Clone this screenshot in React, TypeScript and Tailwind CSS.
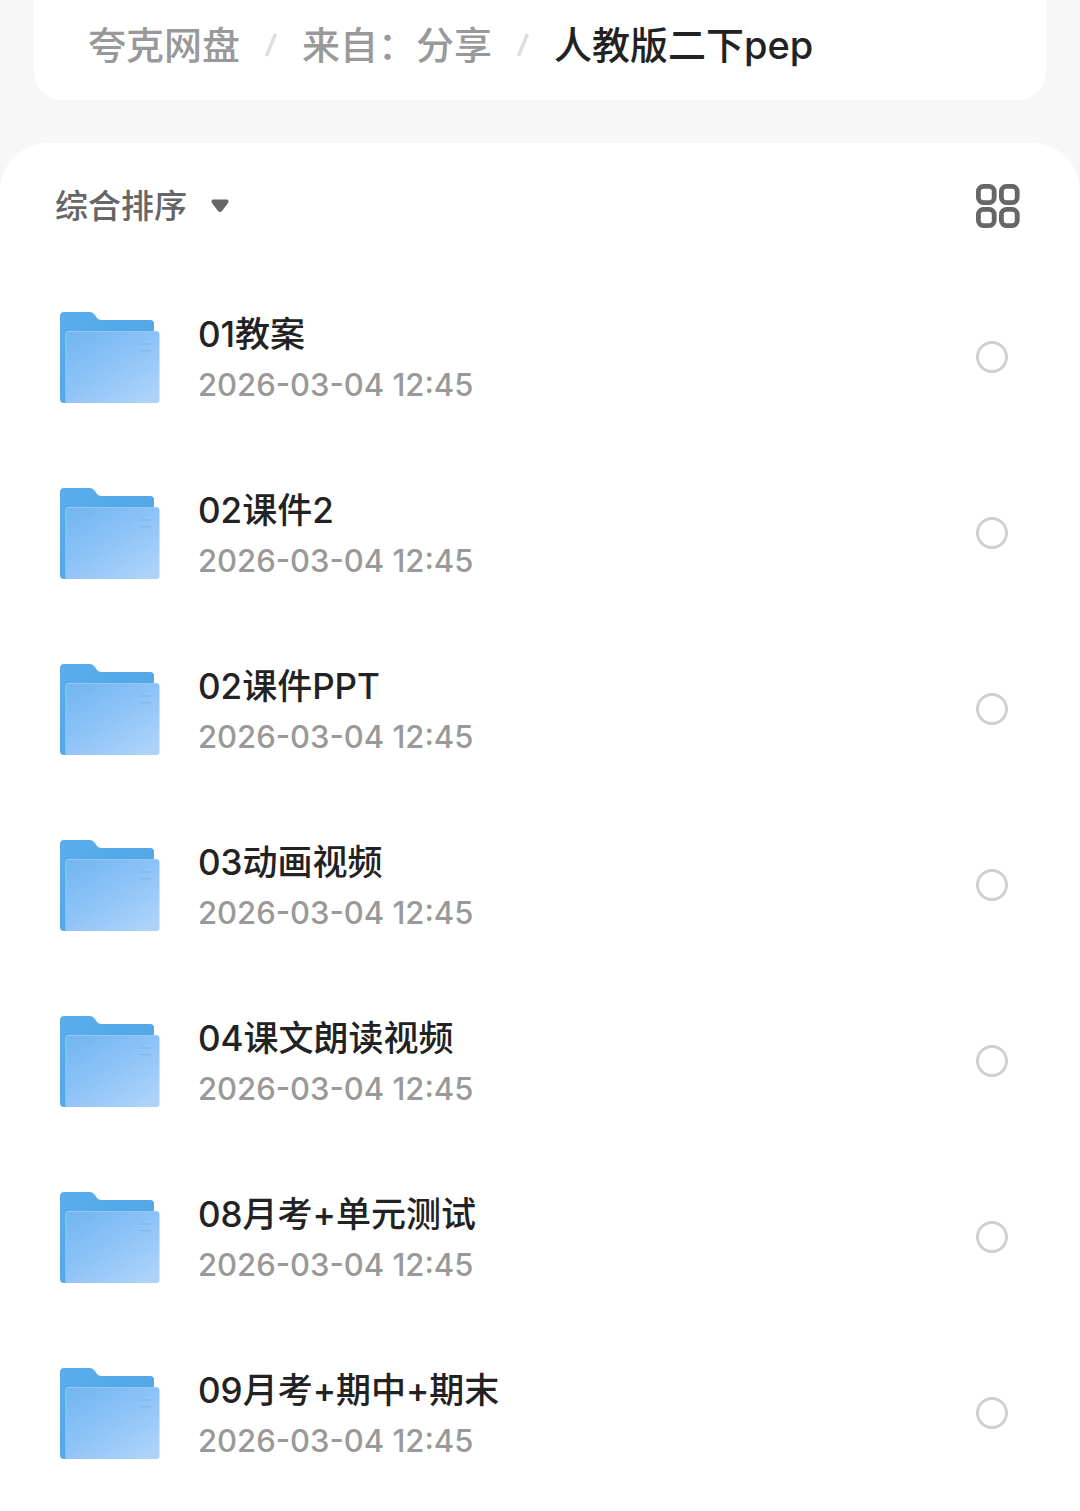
const crumbs = ['夸克网盘', '来自：分享']

const folders = [
  { name: '01教案', date: '2026-03-04 12:45' },
  { name: '02课件2', date: '2026-03-04 12:45' },
  { name: '02课件PPT', date: '2026-03-04 12:45' },
  { name: '03动画视频', date: '2026-03-04 12:45' },
  { name: '04课文朗读视频', date: '2026-03-04 12:45' },
  { name: '08月考+单元测试', date: '2026-03-04 12:45' },
  { name: '09月考+期中+期末', date: '2026-03-04 12:45' },
]

function FolderIcon() {
  return (
    <svg viewBox="0 0 100 92" className="w-25 shrink-0" aria-hidden="true">
      <defs>
        <linearGradient id="folder-back" x1="0" y1="0" x2="1" y2="1">
          <stop offset="0" stopColor="#5aafea" />
          <stop offset="0.4" stopColor="#53a8e8" />
          <stop offset="1" stopColor="#5aa9e6" />
        </linearGradient>
        <linearGradient id="folder-front" x1="0.1" y1="0" x2="0.9" y2="1">
          <stop offset="0" stopColor="#72b6f1" />
          <stop offset="0.5" stopColor="#8fc4f7" />
          <stop offset="1" stopColor="#afd4fb" />
        </linearGradient>
      </defs>
      <path
        d="M4 1H30Q33 1 35 4L37 7Q38.500 9 41 9H90Q94 9 94 13V92H4Q0 92 0 88V5Q0 1 4 1Z"
        fill="url(#folder-back)"
      />
      <path
        d="M8 20H96Q99.500 20 99.500 23V89Q99.500 92 96.500 92H5.500V22.500Q5.500 20 8 20Z"
        fill="url(#folder-front)"
      />
      <path
        d="M6 91V22.500Q6 20.500 8 20.500H96"
        fill="none"
        stroke="#93c8f6"
        strokeWidth="1"
      />
      <path d="M80 33H91M80 39.500H91" stroke="#7fb9ee" strokeWidth="1.500" />
    </svg>
  )
}

function GridIcon() {
  return (
    <svg
      viewBox="0 0 44 44"
      className="size-11"
      fill="none"
      stroke="#666666"
      strokeWidth="4.800"
      aria-hidden="true"
    >
      <rect x="2.400" y="2.400" width="15.800" height="16.200" rx="5" />
      <rect x="25.400" y="2.400" width="15.800" height="16.200" rx="5" />
      <rect x="2.400" y="25.400" width="15.800" height="16.200" rx="5" />
      <rect x="25.400" y="25.400" width="15.800" height="16.200" rx="5" />
    </svg>
  )
}

function Slash() {
  return (
    <svg viewBox="0 0 12 24" className="w-3 shrink-0" aria-hidden="true">
      <path d="M1.500 23L10.500 1" stroke="#dedede" strokeWidth="3.500" />
    </svg>
  )
}

export default function App() {
  return (
    <main className="min-h-screen bg-[#f7f7f7] font-['Inter','Noto_Sans_CJK_SC',sans-serif] font-medium">
      <nav
        aria-label="路径"
        className="mx-8.5 flex h-25 items-start rounded-b-[28px] bg-white px-[54px] pt-4 text-[38px] leading-[58px]"
      >
        <ol className="flex items-center gap-[25px]">
          {crumbs.map((crumb) => (
            <li key={crumb} className="flex items-center gap-[25px]">
              <a href="#" className="text-[#999999]">
                {crumb}
              </a>
              <Slash />
            </li>
          ))}
          <li aria-current="page" className="text-[#222222]">
            人教版二下pep
          </li>
        </ol>
      </nav>

      <section className="mt-[43px] min-h-[calc(100vh-143px)] rounded-t-[48px] bg-white">
        <div className="flex h-[126px] items-center justify-between pr-15 pl-[55px]">
          <label className="flex items-center gap-6 text-[#666666]">
            <select
              aria-label="排序方式"
              className="appearance-none bg-transparent text-[33px] leading-12 outline-none"
            >
              <option>综合排序</option>
            </select>
            <svg viewBox="0 0 18 14" className="w-4.5" aria-hidden="true">
              <path
                d="M2 0.500H16Q18.500 1.500 17 4L11 12Q9 14 7 12L1 4Q-0.500 1.500 2 0.500Z"
                fill="#666666"
              />
            </svg>
          </label>
          <button type="button" aria-label="网格视图">
            <GridIcon />
          </button>
        </div>

        <ul>
          {folders.map((folder, i) => (
            <li key={folder.name}>
              <label
                htmlFor={`folder-${i}`}
                className="flex h-44 items-center pr-18 pl-15"
              >
                <FolderIcon />
                <div className="ml-[38px] min-w-0 flex-1 pt-1">
                  <p className="text-[35px] leading-[52px] text-[#222222]">
                    {folder.name}
                  </p>
                  <p className="text-[31px] leading-[50px] text-[#999999]">
                    {folder.date}
                  </p>
                </div>
                <input
                  id={`folder-${i}`}
                  type="checkbox"
                  className="size-8 shrink-0 appearance-none rounded-full border-3 border-[#d0d0d0] checked:border-[#3b82f6] checked:bg-[#3b82f6]"
                />
              </label>
            </li>
          ))}
        </ul>
      </section>
    </main>
  )
}
